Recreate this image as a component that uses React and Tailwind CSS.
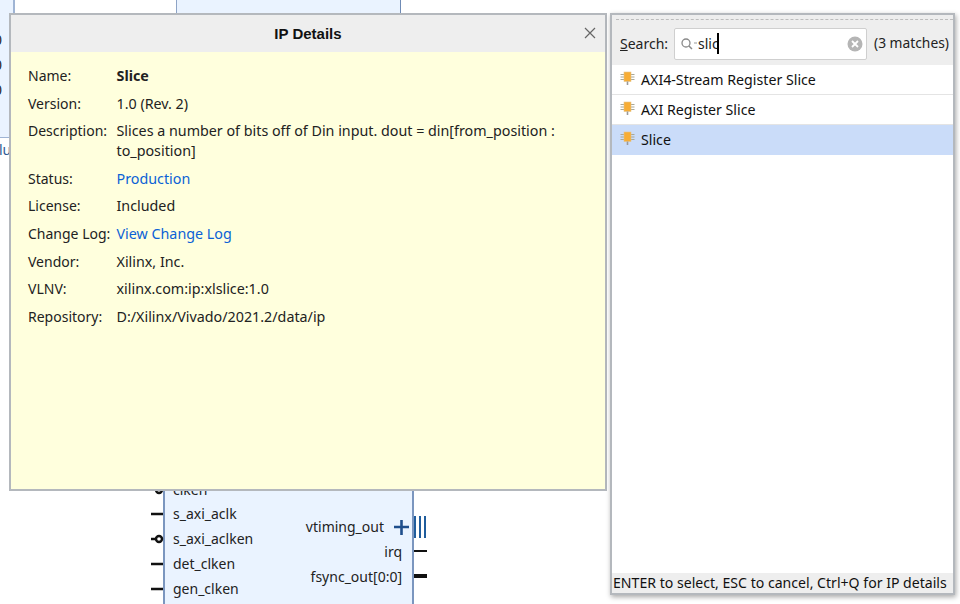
const font = { fontFamily: '"Noto Sans", sans-serif' };

function IpIcon({ className = "" }) {
  return (
    <svg width="16" height="16" viewBox="0 0 16 16" className={className}>
      <path d="M0.500 3.500h3.500M0.500 6h3.500M0.500 8.500h3.500M11 3.500h3.500M11 6h3.500M11 8.500h3.500" stroke="#a8a898" strokeWidth="1" />
      <rect x="4" y="1" width="7" height="9.500" fill="#f7ad35" stroke="#e3c48a" strokeWidth="0.600" />
      <path d="M7.500 10.500v3.500" stroke="#9a9a9a" strokeWidth="1.600" />
    </svg>
  );
}

function Row({ label, children, className = "" }) {
  return (
    <div className={`grid grid-cols-[88.500px_1fr] leading-[20px] ${className}`}>
      <div className="text-[#222] text-[14px]">{label}</div>
      <div className="text-[#222]">{children}</div>
    </div>
  );
}

function Backdrop() {
  return (
    <>
      <div className="absolute left-0 top-0 w-[15px] h-[138px] bg-[#eaf3ff] border-b border-r-2 border-[#9fb4d4] text-[14px] text-[#222] leading-[25px] pt-[27px] overflow-hidden">
        <div className="-ml-[6px]">0</div>
        <div className="-ml-[6px]">0</div>
        <div className="-ml-[6px]">0</div>
      </div>
      <div className="absolute left-0 top-[140px] w-[10px] overflow-hidden text-[14px] text-[#2f5a94] leading-[20px]">
        <div className="-ml-[1px]">lu</div>
      </div>
      <div className="absolute left-[15px] top-0 w-[162px] h-[14px] border-r border-[#8ea4c6] bg-white" />
      <div className="absolute left-[177px] top-0 w-[224px] h-[14px] border-r border-[#6f8bb5] bg-[#eaf3ff]" />
      <div className="absolute left-[163px] top-[490px] w-[251px] h-[114px] bg-[#eaf3ff] border-l-2 border-r-2 border-[#7b96bf] text-[14px] text-[#222]">
        <div className="absolute left-[8px] -top-[10px] leading-[20px]">clken</div>
        <div className="absolute left-[8px] top-[14px] leading-[20px]">s_axi_aclk</div>
        <div className="absolute left-[8px] top-[39px] leading-[20px]">s_axi_aclken</div>
        <div className="absolute left-[8px] top-[64px] leading-[20px]">det_clken</div>
        <div className="absolute left-[8px] top-[89px] leading-[20px]">gen_clken</div>
        <div className="absolute right-[28px] top-[27px] leading-[20px]">vtiming_out</div>
        <div className="absolute right-[10px] top-[52px] leading-[20px]">irq</div>
        <div className="absolute right-[10px] top-[77px] leading-[20px]">fsync_out[0:0]</div>
      </div>
      <svg className="absolute left-[150px] top-[484px]" width="14" height="120" viewBox="0 0 14 120">
        <circle cx="9" cy="6" r="3" fill="#fff" stroke="#111" strokeWidth="2.400" />
        <path d="M1 30h12M1 80h12M1 105h12" stroke="#111" strokeWidth="2.500" />
        <path d="M1 55h5" stroke="#111" strokeWidth="2.500" />
        <circle cx="9" cy="55" r="3" fill="#fff" stroke="#111" strokeWidth="2.400" />
      </svg>
      <svg className="absolute left-[392px] top-[514px]" width="36" height="70" viewBox="0 0 36 70">
        <path d="M2 13h15M9.500 6v15" stroke="#1f4e8c" strokeWidth="2.600" />
        <path d="M23 2v22M28 2v22M33 2v22" stroke="#1f5c9c" strokeWidth="2" />
        <path d="M22 37h13" stroke="#111" strokeWidth="2" />
        <path d="M22 62h13" stroke="#111" strokeWidth="4" />
      </svg>
    </>
  );
}

function Dialog() {
  return (
    <div className="absolute left-[9px] top-[13px] w-[598px] h-[478px] border-2 border-[#b4b8bd] flex flex-col bg-[#ffffdd]">
      <div className="h-[37px] bg-[#eeeeee] flex items-center justify-center relative shrink-0">
        <span className="text-[15px] font-bold text-[#111] pt-[1px]" style={{ fontFamily: '"Liberation Sans", sans-serif' }}>IP Details</span>
        <svg className="absolute right-[9px] top-[12px]" width="12" height="12" viewBox="0 0 12 12">
          <path d="M1 1l10 10M11 1L1 11" stroke="#666" strokeWidth="1.200" />
        </svg>
      </div>
      <div className="pl-[17px] pt-[14px] pr-[20px] text-[14.300px] flex flex-col gap-[7.600px]">
        <Row label="Name:"><span className="font-bold">Slice</span></Row>
        <Row label="Version:">1.0 (Rev. 2)</Row>
        <Row label="Description:">Slices a number of bits off of Din input. dout = din[from_position :<br />to_position]</Row>
        <Row label="Status:"><span className="text-[#0b62d6]">Production</span></Row>
        <Row label="License:">Included</Row>
        <Row label="Change Log:"><span className="text-[#0b62d6]">View Change Log</span></Row>
        <Row label="Vendor:">Xilinx, Inc.</Row>
        <Row label="VLNV:">xilinx.com:ip:xlslice:1.0</Row>
        <Row label="Repository:">D:/Xilinx/Vivado/2021.2/data/ip</Row>
      </div>
    </div>
  );
}

function ListItem({ text, selected }) {
  return (
    <div className={`h-[30px] flex items-center pl-[8px] gap-[5px] border-b ${selected ? "bg-[#cadcf9] border-[#cadcf9]" : "bg-white border-[#e4e4e4]"}`}>
      <IpIcon className="-mt-[2px]" />
      <span className="text-[14.200px] text-[#111]">{text}</span>
    </div>
  );
}

function SearchPanel() {
  return (
    <div className="absolute left-[610px] top-[13px] w-[345px] h-[582px] border-2 border-[#b4b8bd] flex flex-col bg-white shadow-[1px_2px_5px_rgba(0,0,0,0.35)]">
      <div className="bg-[#eeeeee] h-[50px] shrink-0 relative flex items-center">
        <div className="absolute left-[4px] right-0 top-[4px] border-t border-dashed border-[#bdbdbd]" />
        <div className="flex items-center pl-[8px] pt-[7px] text-[14px] text-[#222] w-full">
          <span className="w-[54px] shrink-0"><span className="underline">S</span>earch:</span>
          <div className="w-[193px] h-[32px] shrink-0 bg-white border border-[#cfcfcf] rounded-[2px] flex items-center pl-[5px] pr-[3px]">
            <svg width="18" height="14" viewBox="0 0 18 14" className="shrink-0">
              <circle cx="6" cy="6" r="4" fill="none" stroke="#8a8a8a" strokeWidth="1.300" />
              <path d="M9 9l3 3" stroke="#8a8a8a" strokeWidth="1.500" />
              <path d="M14 6h3" stroke="#aaa" strokeWidth="1.200" />
            </svg>
            <span className="ml-[0px] text-[#222]">slic</span>
            <span className="w-[2px] h-[21px] bg-black -ml-[2px]" />
            <svg width="16" height="16" viewBox="0 0 16 16" className="ml-auto shrink-0">
              <circle cx="8" cy="8" r="7.500" fill="#b5b5b5" />
              <path d="M5 5l6 6M11 5l-6 6" stroke="#fff" strokeWidth="1.800" />
            </svg>
          </div>
          <span className="ml-[7px] whitespace-nowrap text-[13.800px]">(3 matches)</span>
        </div>
      </div>
      <div className="flex-1 flex flex-col bg-white">
        <ListItem text="AXI4-Stream Register Slice" />
        <ListItem text="AXI Register Slice" />
        <ListItem text="Slice" selected />
      </div>
      <div className="h-[20px] bg-[#eeeeee] shrink-0 text-[14.100px] text-[#111] leading-[20px] pl-[1px] whitespace-nowrap">
        ENTER to select, ESC to cancel, Ctrl+Q for IP details
      </div>
    </div>
  );
}

export default function App() {
  return (
    <div className="relative w-[960px] h-[604px] bg-white overflow-hidden" style={font}>
      <Backdrop />
      <Dialog />
      <SearchPanel />
    </div>
  );
}
